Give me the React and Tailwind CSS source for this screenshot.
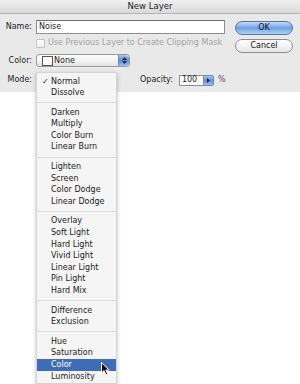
import React from 'react';

const groups = [
  ['Normal', 'Dissolve'],
  ['Darken', 'Multiply', 'Color Burn', 'Linear Burn'],
  ['Lighten', 'Screen', 'Color Dodge', 'Linear Dodge'],
  ['Overlay', 'Soft Light', 'Hard Light', 'Vivid Light', 'Linear Light', 'Pin Light', 'Hard Mix'],
  ['Difference', 'Exclusion'],
  ['Hue', 'Saturation', 'Color', 'Luminosity'],
];

const Stepper = () => (
  <div className="w-[11px] h-full rounded-r-[3px] bg-gradient-to-b from-[#a9c6ee] via-[#5d8fd8] to-[#9cc0ef] border-l border-[#6c8cbc] flex flex-col items-center justify-center gap-[1px]">
    <svg width="5" height="3" viewBox="0 0 5 3"><path d="M0 3 L2.5 0 L5 3 Z" fill="#1b2a44" /></svg>
    <svg width="5" height="3" viewBox="0 0 5 3"><path d="M0 0 L2.5 3 L5 0 Z" fill="#1b2a44" /></svg>
  </div>
);

const Cursor = () => (
  <svg width="10" height="14" viewBox="0 0 10 14" className="absolute left-[101px] top-[362px]">
    <path d="M0.5 0.5 L0.5 11 L3 8.6 L5 13 L6.8 12.2 L4.8 8 L8.2 8 Z" fill="#111" stroke="#fff" strokeWidth="1" />
  </svg>
);

const Menu = () => (
  <div className="absolute left-[36px] top-[72px] w-[81px] bottom-0 bg-[#f5f5f5] border border-[#d4d4d4] shadow-[0_2px_4px_rgba(0,0,0,0.25)] pt-[2.5px]">
    {groups.map((group, gi) => (
      <div key={gi}>
        {gi > 0 && (
          <div className="h-[8px] flex items-center">
            <div className="w-full h-px bg-[#dcdcdc]" />
          </div>
        )}
        {group.map((item) => (
          <div
            key={item}
            className={
              'relative h-[11.6px] leading-[11.6px] pl-[14px] ' +
              (item === 'Color' ? 'bg-[#3f6cb6] text-white' : 'text-[#1c1c1c]')
            }
          >
            {item === 'Normal' && <span className="absolute left-[5px]">✓</span>}
            {item}
          </div>
        ))}
      </div>
    ))}
  </div>
);

export default function App() {
  return (
    <div className="relative w-[300px] h-[384px] overflow-hidden bg-white font-['DejaVu_Sans',sans-serif] text-[8px] text-[#1c1c1c]">
      <div className="h-[92px] bg-[#e9e9e9] flex flex-col">
        <div className="h-[14px] shrink-0 flex items-center justify-center bg-gradient-to-b from-[#f0f0f0] to-[#d9d9d9] border-b border-[#b4b4b4] text-[8.5px] text-[#222]">
          New Layer
        </div>

        <div className="flex pt-[6px] pr-[7px]">
          <div className="flex-1 flex flex-col">
            <div className="flex items-center h-[14px]">
              <div className="w-[33px] text-right pr-[1px]">Name:</div>
              <div className="ml-[3px] w-[189px] h-[14px] bg-white border border-[#8e8e8e] border-t-[#6e6e6e] flex items-center pl-[2px]">
                Noise
              </div>
            </div>

            <div className="flex items-center h-[10px] mt-[4px]">
              <div className="ml-[36px] w-[9px] h-[9px] rounded-[1px] border border-[#c4c4c4] bg-gradient-to-b from-white to-[#ececec]" />
              <div className="ml-[3px] text-[#a3a3a3]">Use Previous Layer to Create Clipping Mask</div>
            </div>

            <div className="flex items-center h-[13px] mt-[6px]">
              <div className="w-[33px] text-right pr-[1px]">Color:</div>
              <div className="ml-[3px] w-[94px] h-[13px] rounded-[3px] border border-[#9a9a9a] bg-gradient-to-b from-white via-[#f4f4f4] to-[#e2e2e2] flex items-center overflow-hidden">
                <div className="ml-[5px] w-[11px] h-[10px] border border-[#555] bg-white" />
                <div className="ml-[1px] flex-1">None</div>
                <Stepper />
              </div>
            </div>

            <div className="flex items-center h-[12px] mt-[7px]">
              <div className="w-[33px] text-right pr-[1px]">Mode:</div>
              <div className="ml-[107px]">Opacity:</div>
              <div className="ml-[6px] w-[25px] h-[11px] bg-white border border-[#8e8e8e] flex items-center pl-[2px]">100</div>
              <div className="w-[10px] h-[11px] rounded-r-[2px] bg-gradient-to-b from-[#a9c6ee] via-[#5d8fd8] to-[#9cc0ef] border border-l-0 border-[#6c8cbc] flex items-center justify-center">
                <svg width="3" height="5" viewBox="0 0 3 5"><path d="M0 0 L3 2.5 L0 5 Z" fill="#1b2a44" /></svg>
              </div>
              <div className="ml-[4px] text-[#555]">%</div>
            </div>
          </div>

          <div className="w-[58px] flex flex-col gap-[4px] pt-[1px]">
            <div className="h-[14px] rounded-full border border-[#5574a8] bg-gradient-to-b from-[#c9dcf6] via-[#6d9ee2] to-[#b7d3f5] flex items-center justify-center text-[#111]">
              OK
            </div>
            <div className="h-[14px] rounded-full border border-[#8e8e8e] bg-gradient-to-b from-white via-[#f2f2f2] to-[#e6e6e6] flex items-center justify-center text-[#111]">
              Cancel
            </div>
          </div>
        </div>
      </div>

      <Menu />
      <Cursor />
    </div>
  );
}
